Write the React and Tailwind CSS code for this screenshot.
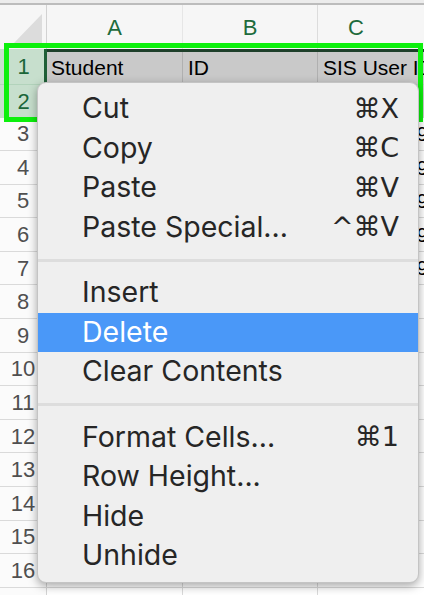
import React from "react";

const items = [
  { label: "Cut", sc: "⌘X" },
  { label: "Copy", sc: "⌘C" },
  { label: "Paste", sc: "⌘V" },
  { label: "Paste Special...", sc: "^⌘V" },
  "sep",
  { label: "Insert" },
  { label: "Delete", active: true },
  { label: "Clear Contents" },
  "sep",
  { label: "Format Cells...", sc: "⌘1" },
  { label: "Row Height..." },
  { label: "Hide" },
  { label: "Unhide" },
];

const cText = {
  3: "1234567890",
  4: "2234567891",
  5: "3234567892",
  6: "4234567893",
  7: "5234567894",
};

function Row({ n }) {
  return (
    <div className="flex h-[33.6px] border-b border-[#dadada]">
      <div className="w-[47px] shrink-0 flex items-center justify-center bg-[#fbfbfb] border-r border-[#d4d4d4] text-[22px] text-[#505050]">
        {n}
      </div>
      <div className="w-[136px] shrink-0 border-r border-[#dadada]" />
      <div className="w-[135px] shrink-0 border-r border-[#dadada]" />
      <div className="flex-1 flex items-center pl-[5px] text-[21px] text-black whitespace-nowrap overflow-hidden">
        {cText[n] || ""}
      </div>
    </div>
  );
}

export default function App() {
  const rows = [];
  for (let i = 3; i <= 17; i++) rows.push(i);
  return (
    <div className="relative w-[424px] h-[595px] overflow-hidden bg-white font-['Liberation_Sans',Arial,sans-serif]">
      {/* top strip */}
      <div className="h-[5px] bg-[#ececec] border-b-2 border-[#bcbcbc]" />
      {/* column header */}
      <div className="flex h-[44px] bg-[#f6f6f6]">
        <div className="w-[47px] shrink-0 relative border-r border-[#d2d2d2]">
          <svg className="absolute left-0 top-0" width="47" height="44" viewBox="0 0 47 44">
            <polygon points="42,9 42,40 12,40" fill="#dcdcdc" />
          </svg>
        </div>
        <div className="w-[136px] shrink-0 flex items-center justify-center border-r border-[#e6e6e6] text-[22px] text-[#1e6b3c]">
          A
        </div>
        <div className="w-[135px] shrink-0 flex items-center justify-center border-r border-[#dcdcdc] text-[22px] text-[#1e6b3c]">
          B
        </div>
        <div className="flex-1 flex items-center justify-center text-[22px] text-[#1e6b3c] pr-[30px]">
          C
        </div>
      </div>
      {/* row 1 */}
      <div className="flex h-[35px]">
        <div className="w-[47px] shrink-0 flex items-center justify-center bg-[#c7dfcd] border-r-[3px] border-[#1f5f37] text-[22px] text-[#1b6639] pl-[3px]">
          1
        </div>
        <div className="flex-1 flex flex-col">
          <div className="h-[3px] bg-[#1d3f2a]" />
          <div className="flex flex-1 bg-[#c9c9c9] text-[21px] text-black">
            <div className="w-[136px] shrink-0 flex items-center pl-[4px] border-r border-[#b0b0b0]">Student</div>
            <div className="w-[135px] shrink-0 flex items-center pl-[5px] border-r border-[#b0b0b0]">ID</div>
            <div className="flex-1 flex items-center pl-[5px] whitespace-nowrap overflow-hidden">SIS User ID</div>
          </div>
        </div>
      </div>
      {/* row 2 */}
      <div className="flex h-[33.5px] border-t border-[#b2d3bb]">
        <div className="w-[47px] shrink-0 flex items-center justify-center bg-[#c7dfcd] border-r-[3px] border-[#1f5f37] text-[22px] text-[#1b6639] pl-[3px]">
          2
        </div>
        <div className="flex-1 bg-[#c9c9c9]" />
      </div>
      {rows.map((n) => (
        <Row key={n} n={n} />
      ))}

      {/* green selection outline */}
      <div className="absolute left-[4px] top-[43px] w-[419px] h-[79px] border-[5px] border-[#0cf00c]" />

      {/* context menu */}
      <div className="absolute left-[37px] top-[82px] w-[382px] h-[501px] rounded-[9px] bg-[#efefef] border border-[#c4c4c4] shadow-[0_3px_10px_rgba(0,0,0,0.35)] pt-[6px] font-['Inter','DejaVu_Sans',sans-serif] text-[28.5px] text-[#262626] overflow-hidden">
        {items.map((it, i) =>
          it === "sep" ? (
            <div key={i} className="py-[11.5px]">
              <div className="h-[3px] bg-[#dddddd]" />
            </div>
          ) : (
            <div
              key={i}
              className={
                "flex items-center justify-between h-[39.5px] pl-[44px] pr-[19px] " +
                (it.active ? "bg-[#4a98f8] text-white" : "")
              }
            >
              <span>{it.label}</span>
              {it.sc ? <span className="font-['DejaVu_Sans','Inter',sans-serif] text-[27px]">{it.sc}</span> : null}
            </div>
          )
        )}
      </div>
    </div>
  );
}
